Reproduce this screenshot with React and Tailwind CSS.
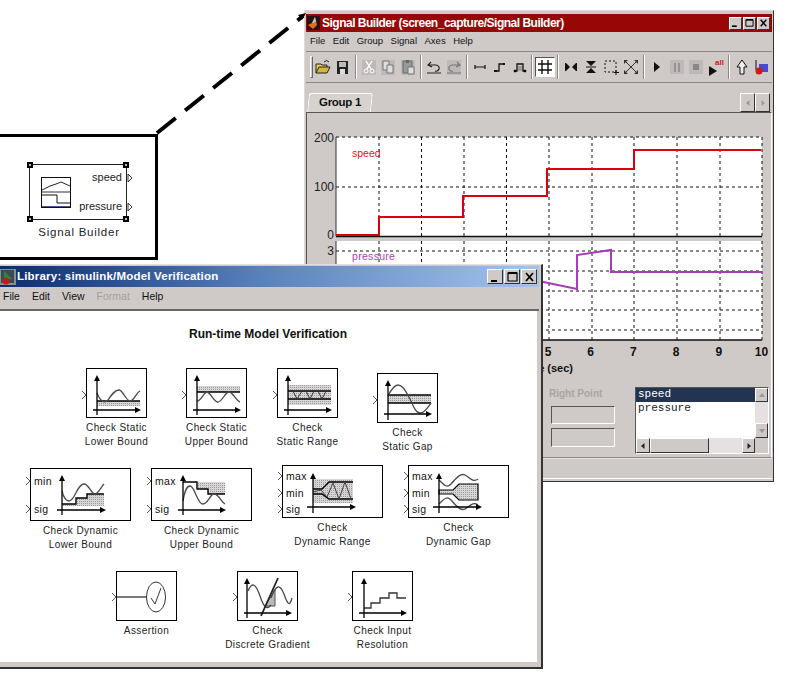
const BAND = "url(#hatch)";

const Axes = ({ x = 10, y = 41, left = 6, right = 54, top = 6, bottom = 46 }) => (
  <g>
    <path d={`M${x} ${top + 4}V${bottom}M${left} ${y}H${right - 4}`} stroke="#000" strokeWidth="1.3" fill="none" />
    <path d={`M${x} ${top}l-3 6h6zM${right} ${y}l-6 -3v6z`} fill="#000" />
  </g>
);

const Port = ({ y }) => (
  <path d={`M-5 ${y - 4}l4 4l-4 4`} stroke="#555" fill="none" />
);

const Block = ({ pos, w = 60, h = 50, label, children, ports = [25] }) => (
  <div className={`absolute flex flex-col items-center ${pos} ${w === 60 ? "w-[61px]" : "w-[101px]"}`}>
    <div className={`relative border border-black bg-white w-full ${h === 50 ? "h-[50px]" : "h-[53px]"}`}>
      <svg className="absolute inset-0 overflow-visible" width="100%" height="100%">
        {ports.map((y) => <Port key={y} y={y} />)}
        {children}
      </svg>
    </div>
    <div className="mt-[3px] text-[10px] leading-[14px] tracking-[0.4px] text-center whitespace-nowrap text-[#222]">
      {label.map((l) => <div key={l}>{l}</div>)}
    </div>
  </div>
);

const PortText = ({ x = 3, y, children }) => (
  <text x={x} y={y} fontSize="10.5" fontFamily="Liberation Sans" letterSpacing="0.3" fill="#111">{children}</text>
);

const curve = { fill: "none", stroke: "#4a4a4a", strokeWidth: 1.3 };

const WinButton = ({ children, big }) => (
  <div className={`flex items-center justify-center bg-[#cfcac8] border border-t-white border-l-white border-b-[#333] border-r-[#333] ${big ? "w-[16px] h-[15px]" : "w-[13px] h-[13px]"}`}>
    <svg width={big ? 11 : 9} height={big ? 10 : 8} viewBox="0 0 11 10">{children}</svg>
  </div>
);

const WinButtons = ({ big }) => (
  <div className="flex items-center gap-[1px]">
    <WinButton big={big}><path d="M1 8h6v2H1z" fill="#000" /></WinButton>
    <WinButton big={big}><path d="M1 1h9v8H1z" fill="none" stroke="#000" strokeWidth="1.2" /><path d="M1 1h9" stroke="#000" strokeWidth="2" /></WinButton>
    <WinButton big={big}><path d="M2 1l7 8M9 1l-7 8" stroke="#000" strokeWidth="1.8" /></WinButton>
  </div>
);

const Sep = () => (
  <div className="w-[6px] flex justify-center">
    <div className="w-[2px] h-[24px] border-l border-[#8a8685] border-r border-r-white" />
  </div>
);

const Tool = ({ children, on }) => (
  <div className={`w-5 h-5 flex items-center justify-center ${on ? "bg-white border border-t-[#555] border-l-[#555] border-b-white border-r-white" : ""}`}>
    <svg width="18" height="18" viewBox="0 0 18 18">{children}</svg>
  </div>
);

const toolbar = [
  <Tool key="open"><path d="M2 15V6h5l1 1h5v2" fill="#e8d060" stroke="#222" /><path d="M2 15l3-6h11l-3 6z" fill="#d8b830" stroke="#222" /><path d="M10 4q3-3 5 0" fill="none" stroke="#222" /></Tool>,
  <Tool key="save"><path d="M3 3h11v13H3z" fill="#222" /><path d="M5 4h7v5H5z" fill="#bbb" /><path d="M6 11h5v5H6z" fill="#ddd" /></Tool>,
  <Sep key="s1" />,
  <Tool key="cut"><rect x="2" y="2" width="14" height="15" fill="#bdb9b8" /><path d="M6 3l5 8M12 3l-5 8" stroke="#fff" strokeWidth="1.4" /><circle cx="6" cy="13" r="2" fill="none" stroke="#fff" /><circle cx="12" cy="13" r="2" fill="none" stroke="#fff" /></Tool>,
  <Tool key="copy"><rect x="2" y="2" width="14" height="15" fill="#bdb9b8" /><path d="M4 3h6v9H4z" fill="#ddd" stroke="#777" /><path d="M8 7h6v8H8z" fill="#ddd" stroke="#777" /></Tool>,
  <Tool key="paste"><rect x="2" y="2" width="14" height="15" fill="#bdb9b8" /><path d="M4 3h9v12H4z" fill="#999" stroke="#666" /><path d="M7 2h3v3H7z" fill="#666" /><path d="M9 9h6v7H9z" fill="#ddd" stroke="#777" /></Tool>,
  <Sep key="s2" />,
  <Tool key="undo"><path d="M6 4L3 7l4 2M3 7h8q4 1 3 4t-4 2" fill="none" stroke="#222" strokeWidth="1.200" /><path d="M2 15h14" stroke="#222" /></Tool>,
  <Tool key="redo"><rect x="2" y="2" width="14" height="15" fill="#bdb9b8" /><path d="M12 4l3 3l-4 2M15 7H7q-4 1-3 4t4 2" fill="none" stroke="#777" strokeWidth="1.200" /><path d="M2 15h14" stroke="#777" /></Tool>,
  <Sep key="s3" />,
  <Tool key="hline"><path d="M4 9h10M4 7v4M14 7v4" stroke="#111" strokeWidth="1.200" fill="none" /></Tool>,
  <Tool key="step"><path d="M4 13h4V6h5" stroke="#111" strokeWidth="1.300" fill="none" /><path d="M3 12h3v2H3zM12 5h2v2h-2z" fill="#111" /></Tool>,
  <Tool key="pulse"><path d="M3 13h3V6h6v7h3" stroke="#111" strokeWidth="1.300" fill="none" /><path d="M3 12h2v2H3zM13 12h2v2h-2zM8 8v5M10 8v5" stroke="#111" strokeWidth="0.500" /></Tool>,
  <Sep key="s4" />,
  <Tool key="grid" on><path d="M6 2v14M12 2v14M2 6h14M2 12h14" stroke="#111" strokeWidth="1.400" /></Tool>,
  <Sep key="s5" />,
  <Tool key="zx"><path d="M4 5v8l4-4zM14 5v8l-4-4z" fill="#111" /><path d="M3.500 5v8M14.500 5v8" stroke="#111" /></Tool>,
  <Tool key="zy"><path d="M4 3h10L9 8zM4 15h10L9 10z" fill="#111" /><path d="M4 9h10" stroke="#111" /></Tool>,
  <Tool key="zbox"><path d="M3 3h11v11H3z" fill="none" stroke="#111" strokeDasharray="2 2" /><path d="M14 12v5M12 14.500h5" stroke="#111" /></Tool>,
  <Tool key="zfull"><path d="M4 4l10 10M14 4L4 14" stroke="#333" /><path d="M2 2h4l-4 4zM16 2v4l-4-4zM2 16v-4l4 4zM16 16h-4l4-4z" fill="#333" /></Tool>,
  <Sep key="s6" />,
  <Tool key="play"><path d="M6 4l6 5l-6 5z" fill="#111" /></Tool>,
  <Tool key="pause"><rect x="2" y="2" width="14" height="14" fill="#bdb9b8" /><path d="M7 5v9M11 5v9" stroke="#8a8685" strokeWidth="1.500" /></Tool>,
  <Tool key="stop"><rect x="2" y="2" width="14" height="14" fill="#bdb9b8" /><rect x="6" y="6" width="6" height="6" fill="#8a8685" /></Tool>,
  <Tool key="all"><path d="M2 8l8 5l-8 5z" fill="#111" /><text x="8" y="7" fontSize="8" fontWeight="bold" fontFamily="Liberation Sans" fill="#d01818">all</text></Tool>,
  <Sep key="s7" />,
  <Tool key="up"><path d="M9 2l5 7h-3v7H7V9H4z" fill="#eee" stroke="#111" /></Tool>,
  <Tool key="last"><path d="M3 2v10h4" stroke="#111" fill="none" /><rect x="6" y="6" width="9" height="8" fill="#4a4ad0" /><circle cx="6" cy="13" r="3.500" fill="#d01818" /></Tool>,
];

const xGrid = [379, 421.500, 464, 506.500, 549, 592, 634, 677, 720];
const xLabels = [5, 6, 7, 8, 9, 10];

const SignalChart = () => (
  <svg width="463" height="270" viewBox="307 113 463 270" className="block" fontFamily="Liberation Sans">
    <rect x="336" y="137" width="426" height="99" fill="#fff" />
    <rect x="336" y="241" width="426" height="99" fill="#fff" />
    <g stroke="#111" strokeDasharray="3 3" fill="none">
      {xGrid.map((x) => <path key={x} d={`M${x} 137V236M${x} 241V340`} />)}
      <path d="M336 137H762M336 187H762M762 137V236M762 241V340" />
      <path d="M336 251H762M336 271H762M336 291H762M336 310H762M336 330H762" />
    </g>
    <path d="M336 236.500H762M336 340H762" stroke="#111" strokeWidth="1.500" />
    <path d="M336 137V236M336 241V340" stroke="#333" />
    <path d="M336 235H379V217H463V196H547V169H634V150H761" fill="none" stroke="#d8000f" strokeWidth="2" />
    <path d="M510 275L577 289V255L611 250V272H762" fill="none" stroke="#a83cb8" strokeWidth="2" />
    <text x="352" y="157" fontSize="10.500" fill="#d8202a">speed</text>
    <text x="352" y="260" fontSize="10.500" letterSpacing="0.3" fill="#b040c0">pressure</text>
    <g fontSize="12" fill="#222" textAnchor="end">
      <text x="334" y="142">200</text>
      <text x="334" y="191">100</text>
      <text x="334" y="239">0</text>
      <text x="334" y="255">3</text>
    </g>
    <g fontSize="12" fontWeight="bold" fill="#111" textAnchor="middle">
      {xLabels.map((n, i) => <text key={n} x={548 + i * 42.700} y="356">{n}</text>)}
      <text x="573" y="372" fontSize="11" textAnchor="end">Time (sec)</text>
    </g>
  </svg>
);

const Inset = ({ className }) => (
  <div className={`border border-t-[#555] border-l-[#555] border-b-white border-r-white ${className}`} />
);

const ScrollBtn = ({ d, className, dim }) => (
  <div className={`flex items-center justify-center bg-[#cfcac8] border border-t-white border-l-white border-b-[#333] border-r-[#333] ${className}`}>
    <svg width="8" height="8" viewBox="0 0 8 8"><path d={d} fill={dim ? "#999" : "#222"} /></svg>
  </div>
);

const SignalWindow = () => (
  <div className="absolute left-[304px] top-[10px] w-[470px] h-[472px] flex flex-col bg-[#cfcac8] border border-[#dedad8] border-r-[#333] border-b-[#333] px-[1px] pt-[3px]">
    <div className="h-[18px] bg-[#990606] flex items-center justify-between pl-[1px] pr-[2px] shrink-0">
      <div className="flex items-center gap-[2px] min-w-0">
        <svg width="13" height="14" viewBox="0 0 13 14"><rect width="13" height="14" fill="#2a1010" /><path d="M1 9l4-2l3-6l2 8l-4 4z" fill="#e07020" /><path d="M5 7l3-6l1 5z" fill="#a8c8e0" /></svg>
        <span className="text-white font-bold text-[12px] tracking-[-0.5px] whitespace-nowrap">Signal Builder (screen_capture/Signal Builder)</span>
      </div>
      <WinButtons />
    </div>
    <div className="h-[19px] flex items-center gap-[7.500px] pl-[4px] text-[9.5px] text-[#111] shrink-0">
      <span>File</span><span>Edit</span><span>Group</span><span>Signal</span><span>Axes</span><span>Help</span>
    </div>
    <div className="h-[31px] flex items-center border-t border-[#8a8685] shrink-0 overflow-hidden">
      <div className="w-[3px] h-[22px] ml-[4px] border border-t-white border-l-white border-b-[#666] border-r-[#666] shrink-0" />
      {toolbar}
    </div>
    <div className="h-[30px] relative border-t border-[#8a8685] flex items-end justify-between shrink-0">
      <div className="h-[19px] w-[64px] flex items-center justify-center bg-[#d6d2d0] border border-b-0 border-white rounded-t-[3px] -skew-x-6 ml-[2px]">
        <span className="skew-x-6 font-bold text-[11.5px] tracking-[-0.3px] text-[#111]">Group 1</span>
      </div>
      <div className="flex mr-[2px]">
        <ScrollBtn dim className="w-[15px] h-[19px]" d="M5.500 1v6L2 4z" />
        <ScrollBtn dim className="w-[15px] h-[19px]" d="M2.500 1v6L6 4z" />
      </div>
    </div>
    <div className="flex-1 border border-t-[#555] border-l-[#555] border-b-[#8a8685] border-r-white flex flex-col overflow-hidden">
      <SignalChart />
      <div className="flex justify-end gap-5 pt-[4px] pr-[2px]">
        <div className="w-[66px] flex flex-col items-start">
          <span className="text-[10px] leading-[13px] mb-[6px] font-bold text-[#a8a4a2]">Right Point</span>
          <Inset className="w-[64px] h-[18px] ml-[2px] mb-[4px]" />
          <Inset className="w-[64px] h-[19px] ml-[2px]" />
        </div>
        <div className="w-[134px] h-[67px] border border-t-[#555] border-l-[#555] border-b-white border-r-white flex flex-col bg-white">
          <div className="flex flex-1 min-h-0">
            <div className="flex-1 font-['Liberation_Mono',monospace] text-[11px] leading-[13px]">
              <div className="h-[14px] bg-[#22344f] text-white pl-[2px]">speed</div>
              <div className="pl-[2px] text-[#222]">pressure</div>
            </div>
            <div className="w-[13px] flex flex-col bg-[#e4e1e0]">
              <ScrollBtn dim className="w-[13px] h-[14px]" d="M4 2l3 4H1z" />
              <div className="flex-1" />
              <ScrollBtn dim className="w-[13px] h-[15px]" d="M4 6L1 2h6z" />
            </div>
          </div>
          <div className="h-[15px] flex bg-[#e4e1e0] shrink-0">
            <ScrollBtn className="w-[14px]" d="M5.500 1v6L2 4z" />
            <div className="w-[59px] bg-[#cfcac8] border border-t-white border-l-white border-b-[#333] border-r-[#333]" />
            <div className="flex-1" />
            <ScrollBtn className="w-[13px]" d="M2.500 1v6L6 4z" />
            <div className="w-[13px] bg-[#cfcac8]" />
          </div>
        </div>
      </div>
    </div>
    <div className="h-[21px] mb-[2px] border-t border-[#e4e2e0] border-b border-b-white shrink-0" />
  </div>
);

const Handle = ({ pos }) => (
  <span className={`absolute w-[6px] h-[6px] bg-black flex items-center justify-center ${pos}`}>
    <span className="w-[2px] h-[2px] bg-[#bbb]" />
  </span>
);

const SignalBlockCallout = () => (
  <div className="absolute -left-1 top-[134px] w-[162px] h-[126px] border-[3px] border-black bg-white">
    <div className="absolute left-[30px] top-[27px] w-[98px] h-[56px] border border-[#222]">
      <Handle pos="-left-[3px] -top-[3px]" />
      <Handle pos="-right-[3px] -top-[3px]" />
      <Handle pos="-left-[3px] -bottom-[3px]" />
      <Handle pos="-right-[3px] -bottom-[3px]" />
      <svg className="absolute left-[11px] top-[12px]" width="30" height="32" viewBox="0 0 30 32">
        <rect x="0.500" y="0.500" width="29" height="30" fill="#fff" stroke="#111" />
        <path d="M1 13l8-4l6-2l5-2l9 4" fill="none" stroke="#222" />
        <path d="M1 15H29" stroke="#333" />
        <path d="M1 18H16V26H29" fill="none" stroke="#111" />
        <path d="M1 29.500H29" stroke="#4a5a90" />
      </svg>
      <span className="absolute right-[4px] top-[5px] text-[11px] leading-[14px] text-[#222]">speed</span>
      <span className="absolute right-[4px] top-[34px] text-[11px] leading-[14px] text-[#222]">pressure</span>
      <svg className="absolute -right-[7px] top-[8px] overflow-visible" width="6" height="40">
        <path d="M1 1l4 4l-4 4zM1 30l4 4l-4 4z" fill="none" stroke="#333" />
      </svg>
    </div>
    <div className="absolute left-[31px] top-[88px] w-[98px] flex justify-center text-[11.5px] leading-[14px] tracking-[0.75px] text-[#222] whitespace-nowrap">Signal Builder</div>
  </div>
);

const LibraryWindow = () => (
  <div className="absolute left-0 top-[264px] w-[543px] h-[405px] flex flex-col bg-[#cfcac8] border-t border-t-[#e4e0de] border-r-2 border-r-[#333] border-b-2 border-b-[#333] pt-[1px] pr-[2px]">
    <div className="h-[21px] bg-gradient-to-r from-[#0c2c70] via-[#5c84bc] to-[#a4c4ec] flex items-center justify-between pr-[2px] shrink-0">
      <div className="flex items-center gap-[1px]">
        <svg width="16" height="16" viewBox="0 0 16 16"><rect width="16" height="16" fill="#8a8f80" /><path d="M1 1h13v13H1z" fill="#3a4a5a" /><path d="M4 2l8 8H4z" fill="#2a8a3a" /><circle cx="6" cy="12" r="3.500" fill="#c81818" /></svg>
        <span className="text-white font-bold text-[11.5px] tracking-[0.2px] whitespace-nowrap">Library: simulink/Model Verification</span>
      </div>
      <WinButtons big />
    </div>
    <div className="h-[24px] flex items-center gap-[12px] pl-[3px] pb-[2px] text-[10.5px] text-[#111] border-b-2 border-b-[#6a6664] shrink-0">
      <span>File</span><span>Edit</span><span>View</span><span className="text-[#a3a09e]">Format</span><span>Help</span>
    </div>
    <div className="relative flex-1 bg-white mr-[2px] overflow-hidden">
      <svg className="absolute" width="0" height="0">
        <defs>
          <pattern id="hatch" width="2" height="2" patternUnits="userSpaceOnUse">
            <rect width="2" height="2" fill="#d8d6d6" />
            <rect width="1" height="1" fill="#9a9898" />
          </pattern>
        </defs>
      </svg>
      <div className="pt-[16px] text-center text-[12px] leading-[14px] font-bold text-[#111] w-[536px]">Run-time Model Verification</div>

      <Block pos="left-[86px] top-[57px]" label={["Check Static", "Lower Bound"]} ports={[26]}>
        <rect x="10" y="32" width="43" height="5" fill={BAND} />
        <path d="M10 32H53" stroke="#000" strokeWidth="1.300" />
        <path d="M10 24C14 34 18 34 21 31C25 25 28 21 32 21C36 21 39 32 43 32C47 32 49 24 53 22" {...curve} />
        <Axes />
      </Block>
      <Block pos="left-[186px] top-[57px]" label={["Check Static", "Upper Bound"]} ports={[26]}>
        <rect x="10" y="17" width="43" height="6" fill={BAND} />
        <path d="M10 23H53" stroke="#000" strokeWidth="1.300" />
        <path d="M10 32C14 32 17 23 20 23C24 24 27 33 31 33C35 33 38 23 42 23C46 23 49 32 53 33" {...curve} />
        <Axes />
      </Block>
      <Block pos="left-[277px] top-[57px]" label={["Check", "Static Range"]} ports={[26]}>
        <rect x="10" y="16" width="43" height="20" fill={BAND} />
        <path d="M10 22H53M10 30H53" stroke="#000" strokeWidth="1.300" />
        <path d="M10 22H15L19 30L24 22H28L32 30L36 22H40L44 30L48 22" fill="none" stroke="#333" />
        <Axes />
      </Block>
      <Block pos="left-[377px] top-[62px]" label={["Check", "Static Gap"]} ports={[26]}>
        <rect x="10" y="21" width="43" height="8" fill={BAND} />
        <path d="M10 21H53M10 29H53" stroke="#000" strokeWidth="1.300" />
        <path d="M10 22C14 14 17 11 20 11C25 11 28 18 32 25C36 34 38 39 42 39C47 39 50 33 53 29" {...curve} />
        <Axes y={40} left={6} right={54} />
      </Block>

      <Block pos="left-[30px] top-[157px]" w={100} h={53} ports={[12, 40]} label={["Check Dynamic", "Lower Bound"]}>
        <PortText y={16}>min</PortText>
        <PortText y={44}>sig</PortText>
        <path d="M31 37V35H45V29H56V25H73V37z" fill={BAND} />
        <path d="M31 35H45V29H56V25H73" fill="none" stroke="#000" strokeWidth="1.400" />
        <path d="M31 22C33 30 35 32 38 32C44 32 46 15 53 15C58 15 60 25 64 25C67 25 70 18 73 15" {...curve} />
        <Axes x={31} y={41} left={26} right={75} />
      </Block>
      <Block pos="left-[151px] top-[157px]" w={100} h={53} ports={[12, 40]} label={["Check Dynamic", "Upper Bound"]}>
        <PortText y={16}>max</PortText>
        <PortText y={44}>sig</PortText>
        <path d="M31 13H73V25H56V20H45V13z" fill={BAND} />
        <path d="M31 13H45V20H56V25H73" fill="none" stroke="#000" strokeWidth="1.400" />
        <path d="M31 32C33 20 35 17 38 17C43 17 45 35 51 35C56 35 58 25 62 25C67 25 69 33 73 35" {...curve} />
        <Axes x={31} y={41} left={26} right={74} />
      </Block>
      <Block pos="left-[282px] top-[154px]" w={100} h={53} ports={[10, 27, 43]} label={["Check", "Dynamic Range"]}>
        <PortText y={14}>max</PortText>
        <PortText y={31}>min</PortText>
        <PortText y={47}>sig</PortText>
        <rect x="30" y="13" width="40" height="24" fill={BAND} />
        <path d="M30 23H39L46 16H70M30 28H39L46 33H70" fill="none" stroke="#000" strokeWidth="1.400" />
        <path d="M30 26L38 24L44 31L50 17L56 33L62 16L68 33" fill="none" stroke="#444" />
        <Axes x={30} y={41} left={24} right={73} top={7} bottom={47} />
      </Block>
      <Block pos="left-[408px] top-[154px]" w={100} h={53} ports={[10, 27, 43]} label={["Check", "Dynamic Gap"]}>
        <PortText y={14}>max</PortText>
        <PortText y={31}>min</PortText>
        <PortText y={47}>sig</PortText>
        <path d="M30 24H44L50 18H69V34H50L44 28H30z" fill={BAND} stroke="#000" strokeWidth="1.200" />
        <path d="M30 14C36 20 38 22 42 18C48 11 52 7 56 9C60 11 64 17 69 13" {...curve} />
        <path d="M30 38C36 32 38 30 42 34C48 41 52 45 56 43C60 41 64 35 69 39" {...curve} />
        <Axes x={30} y={41} left={24} right={73} top={7} bottom={47} />
      </Block>

      <Block pos="left-[116px] top-[260px]" label={["Assertion"]} ports={[25]}>
        <path d="M0 25H30" stroke="#333" strokeWidth="1.300" />
        <ellipse cx="39" cy="25" rx="9.500" ry="15" fill="none" stroke="#333" />
        <path d="M34 26L38 32L44 16" fill="none" stroke="#333" />
      </Block>
      <Block pos="left-[237px] top-[260px]" label={["Check", "Discrete Gradient"]} ports={[25]}>
        <path d="M27 34H37V18z" fill="#bdb9b8" stroke="#555" />
        <path d="M10 19C14 9 18 12 22 24C26 36 29 38 33 33" {...curve} />
        <path d="M33 26C38 12 42 12 46 22C50 34 52 34 54 26" {...curve} />
        <path d="M23 44L40 6" stroke="#222" strokeWidth="1.800" />
        <Axes x={9} y={41} left={6} right={54} />
      </Block>
      <Block pos="left-[352px] top-[260px]" label={["Check Input", "Resolution"]} ports={[25]}>
        <path d="M11 36H18V31H27V26H36V21H44V26H53" fill="none" stroke="#333" strokeWidth="1.300" />
        <Axes x={11} y={41} left={6} right={54} />
      </Block>
    </div>
    <div className="h-[5px] shrink-0" />
  </div>
);

const App = () => {
  return (
    <div className="relative w-[803px] h-[682px] bg-white overflow-hidden font-['Liberation_Sans',sans-serif]">
      <SignalWindow />
      <SignalBlockCallout />
      <svg className="absolute left-[150px] top-[8px]" width="160" height="132" viewBox="150 8 160 132">
        <path d="M157 133L303 16" fill="none" stroke="#000" strokeWidth="4" strokeDasharray="24 12" />
        <path d="M306 13L298 15L302 20z" fill="#000" />
      </svg>
      <LibraryWindow />
    </div>
  );
};

export default App;
